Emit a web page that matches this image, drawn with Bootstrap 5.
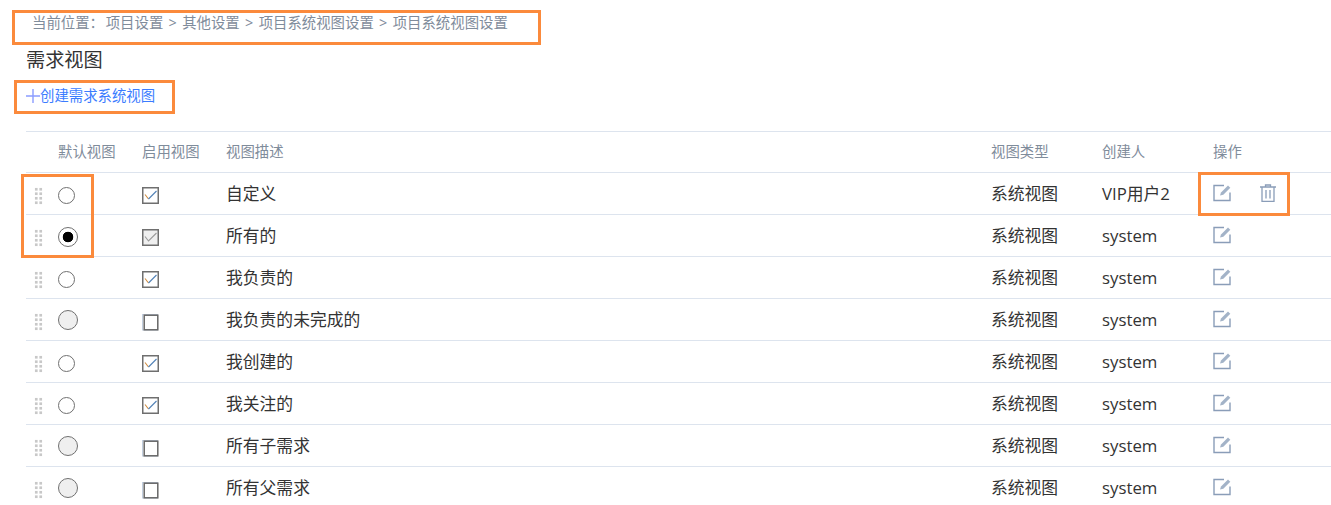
<!DOCTYPE html>
<html lang="zh">
<head>
    <meta charset="UTF-8">
    <meta name="viewport" content="width=device-width, initial-scale=1.0">
    <title>需求视图</title>
    <link href="https://cdn.jsdelivr.net/npm/bootstrap@5.3.0/dist/css/bootstrap.min.css" rel="stylesheet">
    <style>
        html, body { height: 505px; overflow: hidden; }
        body { font-family: "Open Sans", "Noto Sans CJK SC", sans-serif; color: #333; background: #fff; position: relative; }
        .crumbs { padding: 12px 0 0 32px; height: 47px; font-size: 14.4px; line-height: 22px; color: #7f8c9b; }
        .crumbs .sep { margin: 0 1.6px; }
        .crumbs .here { margin-right: -2px; }
        .page-title { margin: 0 0 0 26px; font-size: 19.2px; line-height: 26px; font-weight: 400; color: #333; }
        .add-link { display: inline-flex; align-items: center; margin: 10px 0 0 26px; height: 26px; font-size: 14.4px; color: #3b7cff; text-decoration: none; }
        .view-wrap { margin: 22px 0 0 26px; }
        .view-table { table-layout: fixed; width: 1305px; margin: 0; border-top: 1px solid #dde4ee; }
        .view-table th, .view-table td { padding: 0; height: 42px; vertical-align: middle; border-bottom: 1px solid #dde4ee; box-shadow: none; }
        .view-table th { height: 41px; font-size: 14.4px; font-weight: 400; color: #7f8c9b; }
        .view-table td { font-size: 16.8px; color: #333; }
        .grip { display: block; width: 9px; height: 18px; margin: 5px 0 0 8px; background-image: radial-gradient(#c8c8c8 1.6px, transparent 1.7px); background-size: 4.5px 4.5px; }
        .rd { appearance: none; display: block; margin: 4px 0 0 0; width: 17px; height: 17px; border-radius: 50%; border: 1.5px solid #707070; background: #fff; }
        .rd.off { width: 20px; height: 20px; margin-top: 1px; background: #efefef; }
        .rd.on { width: 20px; height: 20px; margin-top: 2px; background: radial-gradient(circle, #000 0 5px, #fff 5.6px); }
        .ck { display: block; width: 17px; height: 17px; margin-top: 4px; }
        .ck.blank { margin-top: 6px; }
        .ops { display: flex; align-items: center; gap: 26px; margin-top: -2px; }
        .mark-box { position: absolute; border: 3px solid #fb8a3c; pointer-events: none; }
        .mb1 { left: 12px; top: 10px; width: 529px; height: 35px; }
        .mb2 { left: 14px; top: 80px; width: 161px; height: 34px; }
        .mb3 { left: 21px; top: 174px; width: 73px; height: 84px; }
        .mb4 { left: 1198px; top: 172px; width: 92px; height: 44px; }
    </style>
</head>
<body>
    <div class="crumbs"><span class="here">当前位置： </span>项目设置 <span class="sep">&gt;</span> 其他设置 <span class="sep">&gt;</span> 项目系统视图设置 <span class="sep">&gt;</span> 项目系统视图设置</div>
    <h1 class="page-title">需求视图</h1>
    <a class="add-link" href="#">
        <svg width="14" height="14" viewBox="0 0 14 14"><path d="M0 7h14M7 0v14" stroke="#8a9cff" stroke-width="1.4" fill="none"/></svg>创建需求系统视图
    </a>

    <div class="view-wrap">
        <table class="table view-table">
            <colgroup>
                <col style="width:32px"><col style="width:84px"><col style="width:84px"><col style="width:765px"><col style="width:111px"><col style="width:111px"><col>
            </colgroup>
            <thead>
                <tr><th></th><th>默认视图</th><th>启用视图</th><th>视图描述</th><th>视图类型</th><th>创建人</th><th>操作</th></tr>
            </thead>
            <tbody id="rows"></tbody>
        </table>
    </div>

    <div class="mark-box mb1"></div>
    <div class="mark-box mb2"></div>
    <div class="mark-box mb3"></div>
    <div class="mark-box mb4"></div>

    <script>
        const views = [
            { name: '自定义', user: 'VIP用户2', radio: 'idle', check: 'on', del: true },
            { name: '所有的', user: 'system', radio: 'on', check: 'locked' },
            { name: '我负责的', user: 'system', radio: 'idle', check: 'on' },
            { name: '我负责的未完成的', user: 'system', radio: 'off', check: 'off' },
            { name: '我创建的', user: 'system', radio: 'idle', check: 'on' },
            { name: '我关注的', user: 'system', radio: 'idle', check: 'on' },
            { name: '所有子需求', user: 'system', radio: 'off', check: 'off' },
            { name: '所有父需求', user: 'system', radio: 'off', check: 'off' }
        ];

        function checkIcon(state) {
            if (state === 'off') {
                return '<svg class="ck blank" viewBox="0 0 17 17"><rect x=".5" y=".5" width="15" height="15.500" fill="#fff" stroke="#c3cfdf"/><rect x="2.200" y="1.200" width="13.600" height="14.600" fill="#fff" stroke="#666" stroke-width="1.500"/></svg>';
            }
            const tick = state === 'on'
                ? '<path d="M3 7.500l3.500 4.500" stroke="#d08a3c" stroke-width="1.100" fill="none"/><path d="M6.500 12l8-8" stroke="#4f7fb5" stroke-width="1.100" fill="none"/>'
                : '<path d="M3 7.500l3.500 4.500 8-8" stroke="#9a9a9a" stroke-width="1.100" fill="none"/>';
            const bg = state === 'locked' ? '#efefef' : '#fff';
            return `<svg class="ck" viewBox="0 0 17 17"><rect x=".75" y=".75" width="15.500" height="15.500" fill="${bg}" stroke="#6f6f6f" stroke-width="1.500"/>${tick}</svg>`;
        }

        const editIcon = '<svg width="20" height="18" viewBox="0 0 20 18" fill="none"><path d="M11 1.500H1v15h16V8.500" stroke="#8a9db8" stroke-width="1.400"/><path d="M7 11.500l1-3 7-7 2.300 2.300-7 7z" fill="#a3b3c8"/></svg>';
        const trashIcon = '<svg width="18" height="18" viewBox="0 0 18 18" fill="none" stroke="#8a9db8" stroke-width="1.300"><path d="M1 3h16M6.500 3V1h5v2M3 3v14.500h12V3M7 6v8.500M11 6v8.500"/></svg>';

        document.getElementById('rows').innerHTML = views.map(v => `
            <tr>
                <td><span class="grip"></span></td>
                <td><input class="rd ${v.radio}" type="radio" tabindex="-1"></td>
                <td>${checkIcon(v.check)}</td>
                <td>${v.name}</td>
                <td>系统视图</td>
                <td>${v.user}</td>
                <td><div class="ops">${editIcon}${v.del ? trashIcon : ''}</div></td>
            </tr>`).join('');
    </script>
    <script src="https://cdn.jsdelivr.net/npm/bootstrap@5.3.0/dist/js/bootstrap.bundle.min.js"></script>
</body>
</html>
